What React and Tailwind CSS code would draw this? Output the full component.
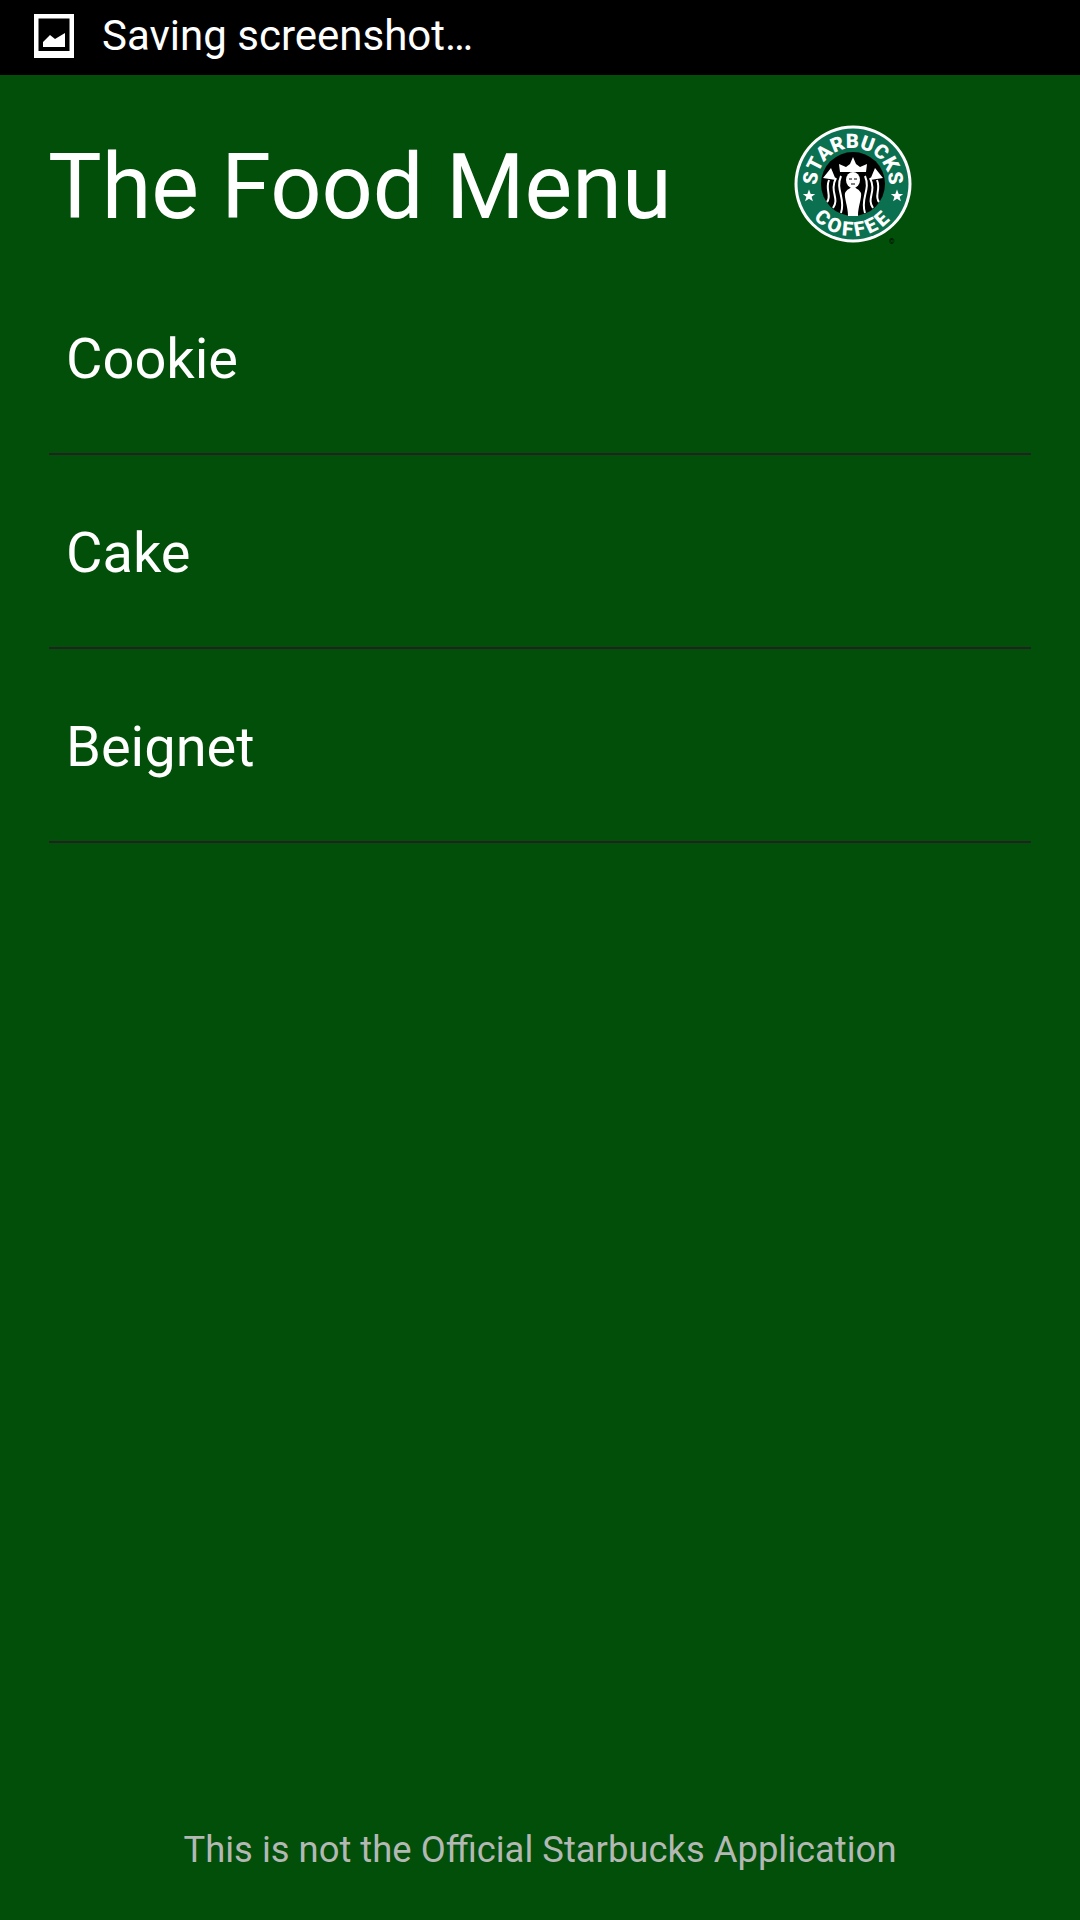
import React from 'react'

const items = ['Cookie', 'Cake', 'Beignet']

// status bar picture icon
const PictureIcon = () => (
  <svg width="40" height="44" viewBox="0 0 40 44" className="shrink-0">
    <rect width="40" height="44" fill="#fff" />
    <rect x="4.5" y="4.5" width="31" height="32.5" fill="#000" />
    <path d="M9 33 L9 28 L16 21 L21 25 L31 19 L31 33 Z" fill="#fff" />
  </svg>
)

const Star = ({ x, y }) => (
  <path
    d="M0 -6.5 L1.7 -2.1 L6.2 -2 L2.6 0.8 L3.9 5.3 L0 2.7 L-3.9 5.3 L-2.6 0.8 L-6.2 -2 L-1.7 -2.1 Z"
    fill="#fff"
    transform={`translate(${x} ${y})`}
  />
)

const StarbucksLogo = () => (
  <svg width="124" height="124" viewBox="-62 -60 124 124" className="shrink-0">
    <defs>
      <path id="topArc" d="M -36 0 A 36 36 0 0 1 36 0" />
      <path id="bottomArc" d="M -52 0 A 52 52 0 0 0 52 0" />
    </defs>
    <circle r="58.5" fill="#fff" />
    <circle r="55.5" fill="#0a7050" />
    <circle r="32" fill="#000" />
    <text fontFamily="Roboto, sans-serif" fontWeight="900" fontSize="20" fill="#fff">
      <textPath href="#topArc" startOffset="50%" textAnchor="middle">STARBUCKS</textPath>
    </text>
    <text fontFamily="Roboto, sans-serif" fontWeight="900" fontSize="20" fill="#fff" letterSpacing="3">
      <textPath href="#bottomArc" startOffset="50%" textAnchor="middle">COFFEE</textPath>
    </text>
    <Star x={-44} y={12} />
    <Star x={44} y={12} />
    {/* crown */}
    <path d="M-13 -12 L-14 -20 L-7 -17 L-3 -20 L0 -27 L3 -20 L7 -17 L14 -20 L13 -12 Z" fill="#fff" />
    {/* tail tips */}
    <path d="M-30 -6 L-22 -16 L-17 -4 Z M30 -6 L22 -16 L17 -4 Z" fill="#fff" />
    {/* hair and tails */}
    <g fill="none" stroke="#fff" strokeWidth="2">
      <path d="M-12 -8 C-18 6 -7 14 -12 29" />
      <path d="M-17 -6 C-24 8 -13 14 -20 24" />
      <path d="M-24 -4 C-28 6 -21 12 -26 18" />
      <path d="M12 -8 C18 6 7 14 12 29" />
      <path d="M17 -6 C24 8 13 14 20 24" />
      <path d="M24 -4 C28 6 21 12 26 18" />
    </g>
    <ellipse cx="0" cy="-4" rx="7" ry="8" fill="#fff" />
    <path d="M-4 -5 h3 M1 -5 h3 M-2 0 h4" stroke="#000" strokeWidth="1.2" />
    <path d="M-5 32 C-5 22 -9 14 -8 9 C-6 5 -3 5 -2 3 L2 3 C3 5 6 5 8 9 C9 14 5 22 5 32 Z" fill="#fff" />
    <text x="36" y="60" fontSize="7" fontFamily="Roboto, sans-serif" fill="#000">©</text>
  </svg>
)

export default function App() {
  return (
    <div className="w-[1080px] h-[1920px] flex flex-col bg-[#014f09] text-white font-['Roboto',sans-serif]">
      <div className="h-[75px] bg-black flex items-center gap-[28px] pl-[34px] pb-[3px]">
        <PictureIcon />
        <span className="text-[42px] leading-none">Saving screenshot…</span>
      </div>

      <main className="flex-1 flex flex-col px-[49px]">
        <header className="flex items-center justify-between h-[186px] pt-[36px] pr-[116px]">
          <h1 className="text-[90px] leading-none font-normal pt-[4px] -ml-[1px]">The Food Menu</h1>
          <StarbucksLogo />
        </header>

        <ul className="flex flex-col">
          {items.map((item) => (
            <li key={item} className="h-[194px] flex items-center pl-[17px] pt-[4px] border-b-2 border-[#222222] text-[56px]">
              {item}
            </li>
          ))}
        </ul>

        <p className="mt-auto pb-[52px] text-center text-[36.4px] leading-none text-[#b4b8b4]">
          This is not the Official Starbucks Application
        </p>
      </main>
    </div>
  )
}
